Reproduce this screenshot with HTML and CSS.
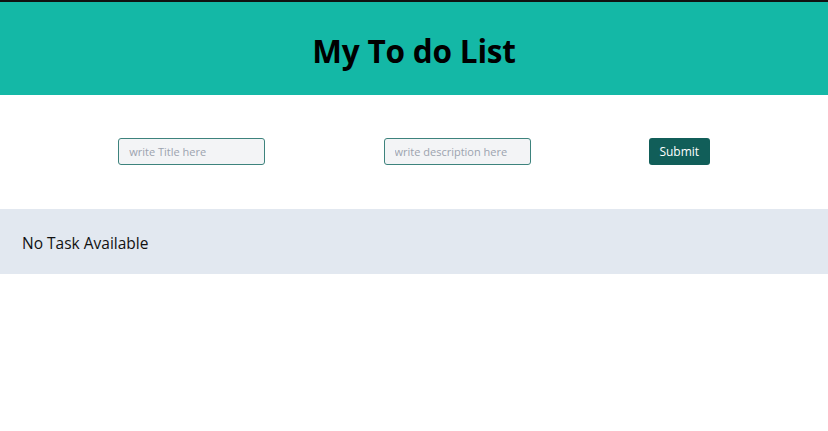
FILE: index.html
```html
<!DOCTYPE html>
<html lang="en">
<head>
<meta charset="utf-8">
<title>My To do List</title>
<link rel="stylesheet" href="styles.css">
</head>
<body>
<header class="header">
  <h1 class="title">My To do List</h1>
</header>
<form class="form">
  <input class="field" type="text" placeholder="write Title here">
  <input class="field" type="text" placeholder="write description here">
  <button class="submit" type="button">Submit</button>
</form>
<section class="tasks">
  <p class="empty">No Task Available</p>
</section>
</body>
</html>
```
FILE: styles.css
```css
* { box-sizing: border-box; }
html, body { margin: 0; padding: 0; }
body {
  font-family: "Open Sans", "Noto Sans", sans-serif;
  background: #ffffff;
  color: #111;
  border-top: 2px solid #111;
}
.header {
  background: #14b8a6;
  height: 93px;
  display: flex;
  align-items: center;
  justify-content: center;
  padding-top: 3px;
}
.title {
  margin: 0;
  font-size: 31.5px;
  font-weight: 700;
  color: #000;
  letter-spacing: -0.2px;
}
.form {
  height: 114px;
  display: flex;
  align-items: center;
  justify-content: space-evenly;
  padding-bottom: 1px;
}
.field {
  width: 147px;
  height: 27px;
  background: #f3f4f6;
  border: 1.5px solid #3d837d;
  border-radius: 3px;
  padding: 0 10px;
  font-family: inherit;
  font-size: 11px;
  color: #333;
  outline: none;
}
.field::placeholder { color: #9ca3af; }
.submit {
  width: 61px;
  height: 27px;
  background: #115e59;
  color: #fff;
  border: none;
  border-radius: 3px;
  font-family: inherit;
  font-size: 12px;
  padding: 0;
}
.tasks {
  background: #e2e8f0;
  height: 65px;
  display: flex;
  align-items: center;
  padding: 0 22px;
}
.empty {
  margin: 0;
  font-size: 15.5px;
  color: #111;
  padding-top: 2px;
}
```
